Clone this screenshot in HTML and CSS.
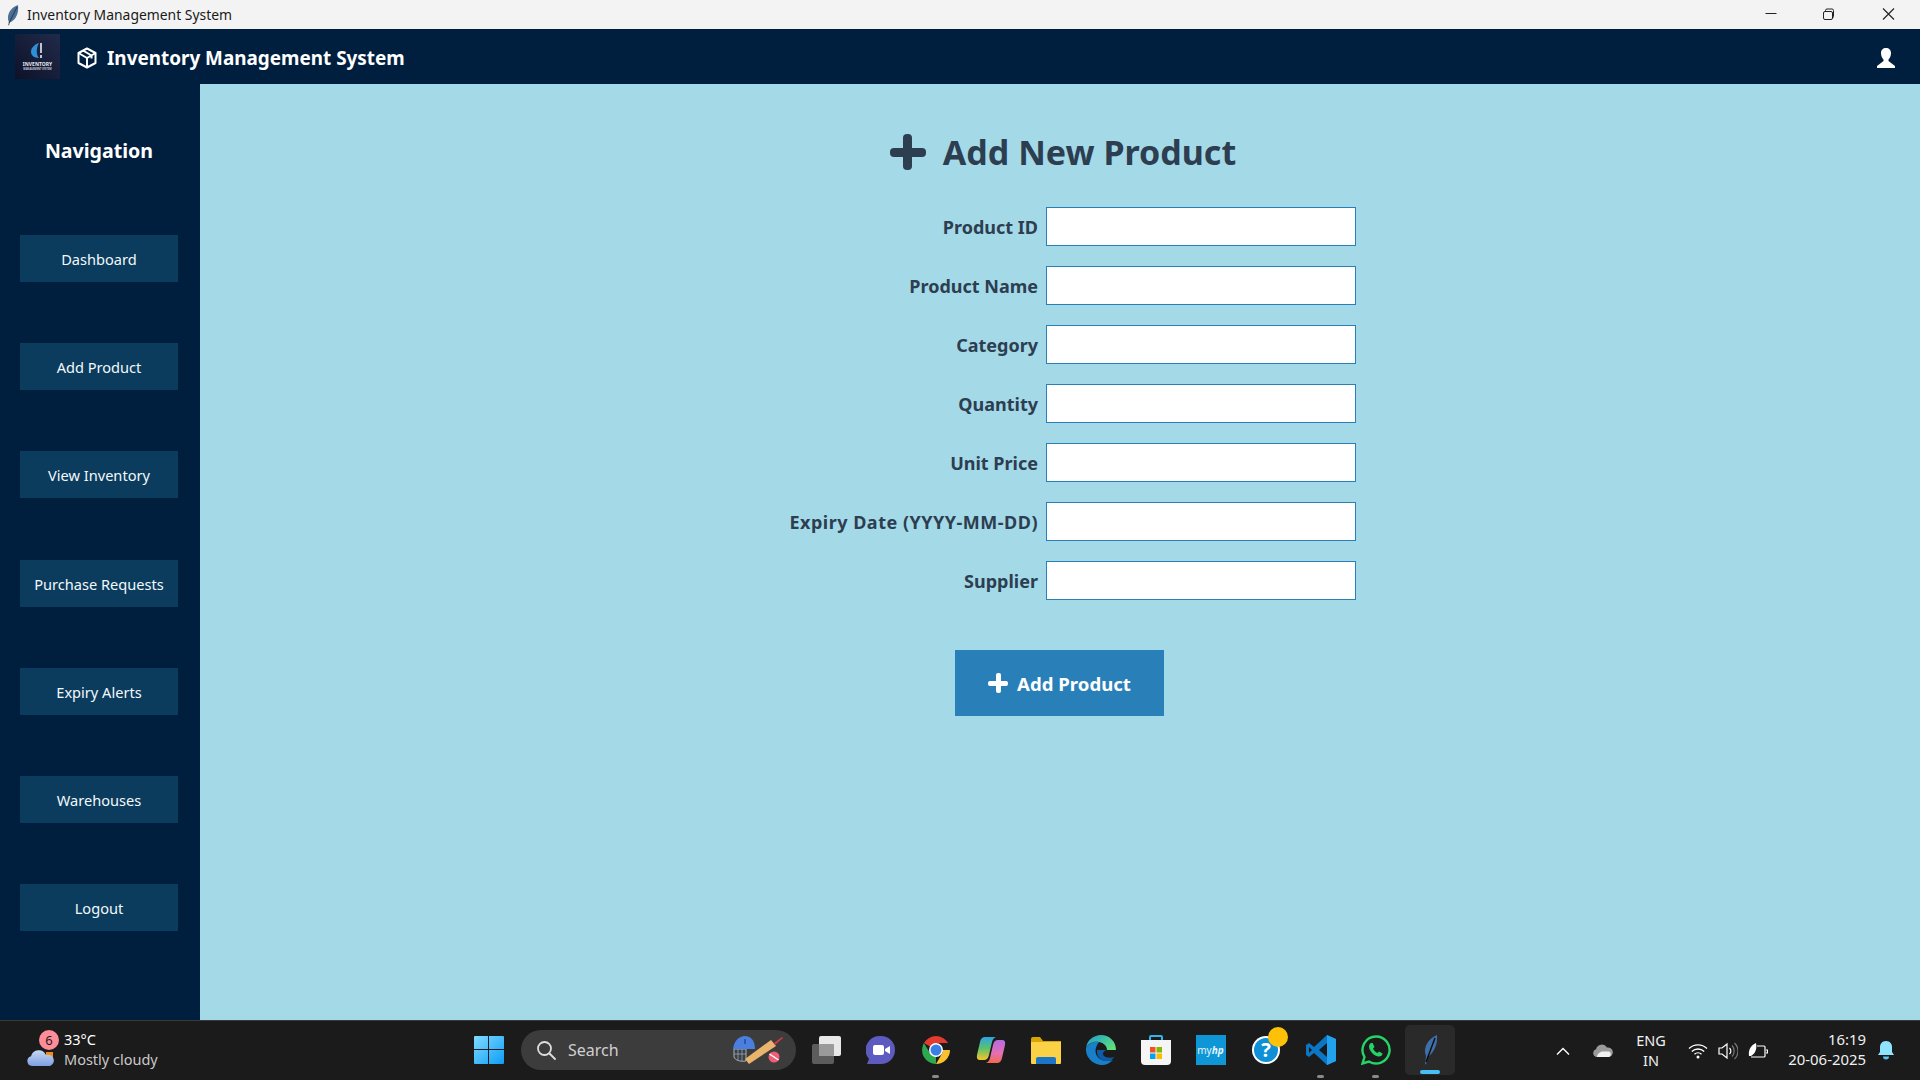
FILE: index.html
```html
<!DOCTYPE html>
<html lang="en">
<head>
<meta charset="utf-8">
<title>Inventory Management System</title>
<link rel="stylesheet" href="styles.css">
</head>
<body>
<div class="titlebar">
  <svg class="feather" width="14" height="22" viewBox="0 0 14 22"><path d="M12 1C6 3 2 8 2 14c0 2 .5 3 1 4l-1 3 1 .5 1-3C10 16 13 9 12 1z" fill="#4d6f95"/><path d="M11 3 3 19" stroke="#26374d" stroke-width="1" fill="none"/></svg>
  <span class="titlebar-text">Inventory Management System</span>
  <div class="win-controls">
    <svg width="58" height="29" viewBox="0 0 58 29"><path d="M21.500 13.500h11" stroke="#222" stroke-width="1"/></svg>
    <svg width="58" height="29" viewBox="0 0 58 29"><rect x="21.500" y="11.500" width="9" height="8" rx="1.500" fill="none" stroke="#222"/><path d="M23.500 11V10.500q0-1.500 1.500-1.500h5q1.500 0 1.500 1.500v6q0 1.500-1.500 1.500" fill="none" stroke="#222"/></svg>
    <svg width="58" height="29" viewBox="0 0 58 29"><path d="M23 8.500l11 11m0-11-11 11" stroke="#222" stroke-width="1.100"/></svg>
  </div>
</div>

<header class="appbar">
  <svg class="logo" width="45" height="45" viewBox="0 0 45 45">
    <defs><linearGradient id="lg" x1="1" y1="0" x2="0" y2="1"><stop offset="0" stop-color="#202a4a"/><stop offset="1" stop-color="#0e1228"/></linearGradient></defs>
    <rect width="45" height="45" fill="url(#lg)"/>
    <path d="M24 9C18 11 16 15 16 18c0 3 3 6 8 6-3-3-3-10 0-15z" fill="#2f8fd8"/>
    <path d="M26 9v10M26 21v3" stroke="#e8eef5" stroke-width="1.600"/>
    <text class="logo-big" x="22.500" y="32" text-anchor="middle">INVENTORY</text>
    <text class="logo-small" x="22.500" y="36" text-anchor="middle">MANAGEMENT SYSTEM</text>
  </svg>
  <svg class="cube" width="20" height="22" viewBox="0 0 20 22" fill="none" stroke="#fff" stroke-width="2" stroke-linejoin="round"><path d="M10 1.500 18.500 6v10L10 20.500 1.500 16V6z"/><path d="M1.500 6 10 11l8.500-5M10 11v9.500M6 3.500 14.500 8.500v3"/></svg>
  <h1 class="app-title">Inventory Management System</h1>
  <svg class="user" width="20" height="20" viewBox="0 0 20 20"><path d="M10 0c3 0 5 2 5 5 0 3-1 5-2.500 6.500v1.500L19 18v2H1v-2l6.500-5v-1.500C6 10 5 8 5 5c0-3 2-5 5-5z" fill="#fff"/></svg>
</header>

<div class="main">
  <nav class="sidebar">
    <h2 class="nav-title">Navigation</h2>
    <ul class="nav-list">
      <li><a class="nav-btn">Dashboard</a></li>
      <li><a class="nav-btn">Add Product</a></li>
      <li><a class="nav-btn">View Inventory</a></li>
      <li><a class="nav-btn">Purchase Requests</a></li>
      <li><a class="nav-btn">Expiry Alerts</a></li>
      <li><a class="nav-btn">Warehouses</a></li>
      <li><a class="nav-btn">Logout</a></li>
    </ul>
  </nav>
  <section class="content">
    <h2 class="page-title"><span class="plus plus-big"></span>Add New Product</h2>
    <form class="form">
      <label class="form-label">Product ID</label><input class="form-input" type="text">
      <label class="form-label">Product Name</label><input class="form-input" type="text">
      <label class="form-label">Category</label><input class="form-input" type="text">
      <label class="form-label">Quantity</label><input class="form-input" type="text">
      <label class="form-label">Unit Price</label><input class="form-input" type="text">
      <label class="form-label form-label-wide">Expiry Date (YYYY-MM-DD)</label><input class="form-input" type="text">
      <label class="form-label">Supplier</label><input class="form-input" type="text">
    </form>
    <button class="submit" type="button"><span class="plus plus-small"></span>Add Product</button>
  </section>
</div>

<footer class="taskbar">
  <div class="weather">
    <div class="weather-icon">
      <svg width="32" height="24" viewBox="0 0 32 24"><rect x="21" y="6" width="7" height="6" fill="#f28a1c"/><defs><linearGradient id="cl" x1="0" y1="0" x2="0" y2="1"><stop offset="0" stop-color="#c7d8f5"/><stop offset="1" stop-color="#7d9fe0"/></linearGradient></defs><path d="M7 20a5 5 0 0 1-1-9.800A8 8 0 0 1 21 9a5.500 5.500 0 0 1 4 11z" fill="url(#cl)"/></svg>
      <span class="weather-badge">6</span>
    </div>
    <div class="weather-text"><span class="temp">33°C</span><span class="cond">Mostly cloudy</span></div>
  </div>
  <div class="dock">
    <div class="cell">
      <svg width="30" height="30" viewBox="0 0 30 30"><defs><linearGradient id="w" x1="0" y1="0" x2="1" y2="1"><stop offset="0" stop-color="#7fdcff"/><stop offset="1" stop-color="#0f9cf5"/></linearGradient></defs><path d="M1 1h13v13H0V2q0-1 1-1zM15 1h14q1 0 1 1v12H15zM0 15h14v14H1q-1 0-1-1zM15 15h15v13q0 1-1 1H15z" fill="url(#w)"/></svg>
    </div>
    <div class="search">
      <svg width="20" height="20" viewBox="0 0 20 20" fill="none" stroke="#ddd" stroke-width="1.800"><circle cx="8.500" cy="8.500" r="6.500"/><path d="M13.500 13.500 19 19" stroke-linecap="round"/></svg>
      <span class="search-text">Search</span>
      <svg class="search-art" width="50" height="29" viewBox="0 0 50 29"><path d="M1 13v8c1 3 6 5 12 4v-12z" fill="#3a3f46" stroke="#a9b0b8" stroke-width="1"/><path d="M1 18h12M5 13v11M9 13v12" stroke="#a9b0b8" stroke-width=".7"/><path d="M0 13C1 5 6 0 12 0c6 0 10 5 10 13H9z" fill="#4a7fe0"/><path d="M12 3v5" stroke="#1f3c85" stroke-width="1.200"/><path d="M16 28l-4-5 26-19 5 6z" fill="#e9b56c"/><path d="M41 7 49 1l1 1-8 7z" fill="#d0394a"/><circle cx="41" cy="21" r="5.500" fill="#ef5e75"/><path d="M36.500 18l9 6" stroke="#fff" stroke-width="1.500"/></svg>
    </div>
    <div class="cell taskview">
      <svg width="30" height="30" viewBox="0 0 30 30"><rect x="1" y="9" width="22" height="20" rx="2" fill="#5c5c5c"/><rect x="8" y="1" width="22" height="20" rx="2" fill="#e8e8e8"/><rect x="8" y="9" width="15" height="12" rx="1" fill="#9a9a9a"/></svg>
    </div>
    <div class="cell">
      <svg width="30" height="30" viewBox="0 0 30 30"><path d="M15 1a14 14 0 0 1 0 28H1l2-5A14 14 0 0 1 15 1z" fill="#5e5bc0"/><rect x="7" y="10" width="11" height="10" rx="2" fill="#fff"/><path d="M19 14l5-3v8l-5-3z" fill="#fff"/></svg>
    </div>
    <div class="cell running">
      <svg width="30" height="30" viewBox="0 0 30 30"><path d="M15 15 2.900 8A14 14 0 0 1 27.100 8H15z" fill="#e33b2e"/><path d="M15 15H29a14 14 0 0 1-14 14L22 17z" fill="#fbc02d"/><path d="M15 15 15 29A14 14 0 0 1 2.900 8L9 18z" fill="#2da94f"/><circle cx="15" cy="15" r="7" fill="#fff"/><circle cx="15" cy="15" r="5.500" fill="#3a7fe6"/></svg>
    </div>
    <div class="cell">
      <svg width="30" height="28" viewBox="0 0 30 28"><defs><linearGradient id="cp1" x1="0" y1="0" x2="0" y2="1"><stop offset="0" stop-color="#2ba4e8"/><stop offset=".5" stop-color="#5fc26a"/><stop offset="1" stop-color="#f5c52c"/></linearGradient><linearGradient id="cp2" x1="0" y1="0" x2="0" y2="1"><stop offset="0" stop-color="#b66ce0"/><stop offset=".6" stop-color="#e76fb0"/><stop offset="1" stop-color="#f06a4a"/></linearGradient></defs><path d="M9 1h11q-3 1-4 5l-3 13q-1 5-5 5H4q-4 0-3-5l3-13Q5 1 9 1z" fill="url(#cp1)"/><path d="M21 27H10q3-1 4-5l3-13q1-5 5-5h4q4 0 3 5l-3 13q-1 5-5 5z" fill="url(#cp2)"/></svg>
    </div>
    <div class="cell">
      <svg width="30" height="27" viewBox="0 0 30 27"><path d="M0 2q0-2 2-2h7l3 4h18v8H0z" fill="#d9a406"/><path d="M0 5h30v21q0 1-1 1H1q-1 0-1-1z" fill="#fbd145"/><path d="M5 25v-3q0-2 2-2h16q2 0 2 2v5H5z" fill="#1c76c8"/></svg>
    </div>
    <div class="cell">
      <svg width="30" height="30" viewBox="0 0 30 30"><defs><linearGradient id="ed" x1="0" y1="0" x2="1" y2="0.700"><stop offset="0" stop-color="#1a9ad6"/><stop offset="1" stop-color="#5ee07b"/></linearGradient></defs><path d="M15 0C8 0 1 5 0 13c2-5 8-7 13-6 5 1 8 4 8 8H30C30 6 23 0 15 0z" fill="url(#ed)"/><path d="M0 13C-1 23 8 30 16 30c4 0 8-2 11-5-6 2-13 1-16-4-3-5-1-10 2-14C7 6 2 9 0 13z" fill="#1a7fc9"/><path d="M11 17c0 6 6 10 11 9 3 0 5-2 6-4-3 1-8 1-10-1-2-2-1-5 3-6H11z" fill="#0f5aa8"/></svg>
    </div>
    <div class="cell">
      <svg width="30" height="30" viewBox="0 0 30 30"><path d="M9 5V2q0-1 1-1h10q1 0 1 1v3" fill="none" stroke="#2eb7ec" stroke-width="2"/><path d="M0 5h30v21q0 4-4 4H4q-4 0-4-4z" fill="#f5f5f5"/><rect x="9" y="12" width="5.500" height="5.500" fill="#f25022"/><rect x="15.500" y="12" width="5.500" height="5.500" fill="#7fba00"/><rect x="9" y="18.500" width="5.500" height="5.500" fill="#00a4ef"/><rect x="15.500" y="18.500" width="5.500" height="5.500" fill="#ffb900"/></svg>
    </div>
    <div class="cell">
      <div class="myhp">my<i>hp</i></div>
    </div>
    <div class="cell help">
      <svg width="30" height="30" viewBox="0 0 30 30"><circle cx="15" cy="15" r="14" fill="#fff"/><circle cx="15" cy="15" r="12" fill="#0e8fd6"/><text class="help-q" x="15" y="22" text-anchor="middle">?</text></svg>
      <span class="help-dot"></span>
    </div>
    <div class="cell running">
      <svg width="30" height="30" viewBox="0 0 30 30"><path d="M21 0l9 4v22l-9 4-13-12-5 4-3-2V10l3-2 5 4z" fill="#0a76c4"/><path d="M21 0l9 4v22l-9 4z" fill="#22a2ed"/><path d="M21 8v14l-8-7z" fill="#1a1a1a"/><path d="M3 12v6l3-3z" fill="#1a1a1a"/></svg>
    </div>
    <div class="cell running">
      <svg width="30" height="30" viewBox="0 0 30 30"><path d="M15 1.500A13.500 13.500 0 0 0 3.500 22L1.500 28.500 8 26.500A13.500 13.500 0 1 0 15 1.500z" fill="none" stroke="#25d366" stroke-width="2.400"/><path d="M10 8c-2 1-2.500 4-1 7 2 3.500 5 6 8 6.500 2.500.4 4.500-1 4.500-3l-3.500-2-1.500 1.500c-2-.8-3.500-2.500-4.500-4.500L13.500 12l-1.800-4z" fill="#25d366"/></svg>
    </div>
    <div class="cell active">
      <svg width="16" height="30" viewBox="0 0 16 30"><path d="M15 0C8 3 3 9 3 16c0 2 .5 3 1 5l-1 8 1 .5 2-8C12 18 16 9 15 0z" fill="#3f6fa8"/><path d="M13 3 4 27" stroke="#0b0b0b" stroke-width="1.400" fill="none"/></svg>
    </div>
  </div>
  <div class="tray">
    <svg class="tray-chevron" width="14" height="8" viewBox="0 0 14 8" fill="none" stroke="#fff" stroke-width="1.400"><path d="M1 7.500 7 1.500l6 6"/></svg>
    <svg class="tray-cloud" width="20" height="13" viewBox="0 0 20 13"><path d="M4 13a4 4 0 0 1-1-7.800A6 6 0 0 1 14 3.500 4.500 4.500 0 0 1 16 13z" fill="#9a9a9a"/><path d="M4 13c0-3 3-5.500 6-5.500h6a3 3 0 0 1 0 5.500z" fill="#f0f0f0"/></svg>
    <div class="tray-lang"><span>ENG</span><span>IN</span></div>
    <svg class="tray-wifi" width="20" height="16" viewBox="0 0 20 16" fill="none" stroke="#fff" stroke-width="1.300"><path d="M1 5.500a13 13 0 0 1 18 0M3.800 8.500a9 9 0 0 1 12.400 0M6.500 11.300a5 5 0 0 1 7 0"/><circle cx="10" cy="14" r="1.500" fill="#fff" stroke="none"/></svg>
    <svg class="tray-vol" width="20" height="18" viewBox="0 0 20 18" fill="none" stroke="#fff" stroke-width="1.200"><path d="M1 6h3l5-4v14l-5-4H1z"/><path d="M11.500 6a4 4 0 0 1 0 6"/><path d="M14 3.500a8 8 0 0 1 0 11M16.500 1a11 11 0 0 1 0 16" stroke="#777"/></svg>
    <svg class="tray-batt" width="20" height="18" viewBox="0 0 20 18" fill="none" stroke="#fff" stroke-width="1.200"><path d="M9 4h7q1 0 1 1v9q0 1-1 1H3"/><path d="M18 8h1.500v3H18"/><path d="M1 14C0 8 3 3 8 1c1 5 0 10-5 13z" fill="#fff" stroke="none"/></svg>
    <div class="clock"><span>16:19</span><span>20-06-2025</span></div>
    <svg class="tray-bell" width="16" height="19" viewBox="0 0 16 19"><path d="M8 0c4 0 6 3 6 6v5l2 3H0l2-3V6c0-3 2-6 6-6z" fill="#8fe3ff"/><path d="M5 15.500h6a3 3 0 0 1-6 0z" fill="#5cc3e8"/></svg>
  </div>
</footer>
</body>
</html>
```
FILE: styles.css
```css
* { box-sizing: border-box; }
html, body { margin: 0; padding: 0; height: 100%; }
body {
  width: 1920px;
  height: 1080px;
  overflow: hidden;
  display: flex;
  flex-direction: column;
  font-family: "Noto Sans", "Open Sans", sans-serif;
}
.titlebar {
  height: 29px;
  flex: none;
  background: #f3f3f3;
  display: flex;
  align-items: center;
  padding-left: 6px;
  color: #1a1a1a;
}
.titlebar-text { margin-left: 7px; font-size: 13.9px; }
.win-controls { margin-left: auto; display: flex; margin-right: 2px; }
.win-controls svg { display: block; }

.appbar {
  height: 55px;
  flex: none;
  background: #001f3f;
  display: flex;
  align-items: center;
  padding: 0 24px 0 15px;
  color: #fff;
}
.logo { display: block; }
.logo-big { font: 700 5px "Noto Sans", sans-serif; fill: #e6e9f0; }
.logo-small { font: 700 2.5px "Noto Sans", sans-serif; fill: #c3c8d6; }
.cube { margin: 3px 0 0 17px; }
.app-title { margin: 3px 0 0 10px; font-size: 18.9px; font-weight: 700; }
.user { margin: 3px 0 0 auto; }

.main { flex: 1; display: flex; min-height: 0; }
.sidebar {
  width: 200px;
  flex: none;
  background: #001f3f;
  padding: 0 22px 0 20px;
  color: #fff;
}
.nav-title {
  margin: 51px 0 0;
  height: 32px;
  line-height: 32px;
  text-align: center;
  font-size: 19.6px;
  font-weight: 700;
}
.nav-list {
  list-style: none;
  margin: 68px 0 0;
  padding: 0;
  display: flex;
  flex-direction: column;
  gap: 61.2px;
}
.nav-btn {
  display: flex;
  align-items: center;
  justify-content: center;
  height: 47px;
  padding-top: 1px;
  background: #0b3c5d;
  font-size: 14.6px;
  color: #f2f8fc;
}

.content {
  flex: 1;
  background: #a4d9e8;
  display: flex;
  flex-direction: column;
  align-items: center;
  color: #2c3e50;
}
.page-title {
  margin: 44px 0 0 6px;
  height: 48px;
  display: flex;
  align-items: center;
  font-size: 34px;
  font-weight: 700;
  color: #2c3e50;
}
.plus { position: relative; display: block; flex: none; }
.plus::before, .plus::after { content: ""; position: absolute; background: currentColor; }
.plus-big { width: 36px; height: 36px; margin-right: 17px; }
.plus-big::before { left: 0; right: 0; top: 13.5px; height: 9px; border-radius: 4px; }
.plus-big::after { top: 0; bottom: 0; left: 13.5px; width: 9px; border-radius: 4px; }
.plus-small { width: 20px; height: 20px; margin-right: 9px; }
.plus-small::before { left: 0; right: 0; top: 7.5px; height: 5px; border-radius: 2px; }
.plus-small::after { top: 0; bottom: 0; left: 7.5px; width: 5px; border-radius: 2px; }

.form {
  align-self: flex-start;
  margin: 31px 0 0 589px;
  display: grid;
  grid-template-columns: 249px 310px;
  column-gap: 8px;
  row-gap: 20.08px;
  align-items: center;
}
.form-label { text-align: right; font-size: 18px; font-weight: 700; color: #2c3e50; }
.form-label-wide { letter-spacing: 0.5px; }
.form-input {
  display: block;
  width: 310px;
  height: 39px;
  background: #fff;
  border: 1px solid #2980b9;
  border-radius: 0;
  outline: none;
}
.submit {
  margin: 50px 1px 0 0;
  width: 209px;
  height: 66px;
  padding-bottom: 1px;
  display: flex;
  align-items: center;
  justify-content: center;
  border: 0;
  background: #2980b9;
  color: #fff;
  font-family: inherit;
  font-size: 18.6px;
  font-weight: 700;
}

.taskbar {
  height: 60px;
  flex: none;
  background: #1b1b1b;
  border-top: 1px solid #3a3a3a;
  display: flex;
  align-items: center;
  color: #fff;
}
.weather { width: 461px; flex: none; display: flex; align-items: center; padding-left: 25px; }
.weather-icon { position: relative; width: 39px; height: 48px; display: flex; align-items: flex-end; }
.weather-icon svg { display: block; margin-bottom: 5px; }
.weather-badge {
  position: absolute;
  left: 14px;
  top: 3px;
  width: 20px;
  height: 20px;
  border-radius: 50%;
  background: #ff8d99;
  color: #1a1a1a;
  font-size: 13px;
  line-height: 20px;
  text-align: center;
}
.weather-text { display: flex; flex-direction: column; font-size: 14.5px; line-height: 20px; margin-bottom: 3px; }
.temp { color: #fff; }
.cond { color: #c9c9c9; }

.dock { display: flex; align-items: center; margin-bottom: 1px; }
.cell { position: relative; width: 55px; height: 50px; flex: none; display: flex; align-items: center; justify-content: center; }
.running::after {
  content: "";
  position: absolute;
  left: 24px;
  bottom: -3px;
  width: 7px;
  height: 3px;
  border-radius: 2px;
  background: #8a8a8a;
}
.active { width: 50px; margin-left: 2px; background: #2a2a2a; border-radius: 5px; }
.active::after {
  content: "";
  position: absolute;
  left: 15px;
  bottom: 1px;
  width: 20px;
  height: 4px;
  border-radius: 2px;
  background: #47c1f5;
}
.search {
  width: 275px;
  height: 40px;
  flex: none;
  margin: 0 2px 0 5px;
  display: flex;
  align-items: center;
  padding: 0 13px 0 15px;
  border-radius: 20px;
  background: #3c3c3c;
}
.search-text { margin-left: 12px; font-size: 16px; color: #d0d0d0; }
.search-art { margin-left: auto; }
.myhp {
  width: 30px;
  height: 30px;
  background: #0f96d6;
  color: #e8f6fc;
  font-size: 10px;
  line-height: 30px;
  text-align: center;
}
.myhp i { font-weight: 700; }
.help-q { font: 700 20px "Noto Sans", sans-serif; fill: #fff; }
.help-dot { position: absolute; left: 30px; top: 2px; width: 20px; height: 20px; border-radius: 50%; background: #ffc107; }

.tray { flex: 1; position: relative; height: 100%; display: flex; align-items: center; font-size: 14.5px; color: #f0f0f0; }
.tray-chevron { margin-left: 101px; }
.tray-cloud { margin-left: 23px; }
.tray-lang { margin: 0 0 2px 20px; width: 36px; display: flex; flex-direction: column; align-items: center; line-height: 20px; }
.tray-wifi { margin-left: 19px; }
.tray-vol { margin-left: 10px; }
.tray-batt { margin-left: 10px; }
.clock { margin: 0 0 3px 18px; width: 80px; display: flex; flex-direction: column; align-items: flex-end; line-height: 20px; font-size: 14.9px; }
.tray-bell { margin-left: 12px; }
```
